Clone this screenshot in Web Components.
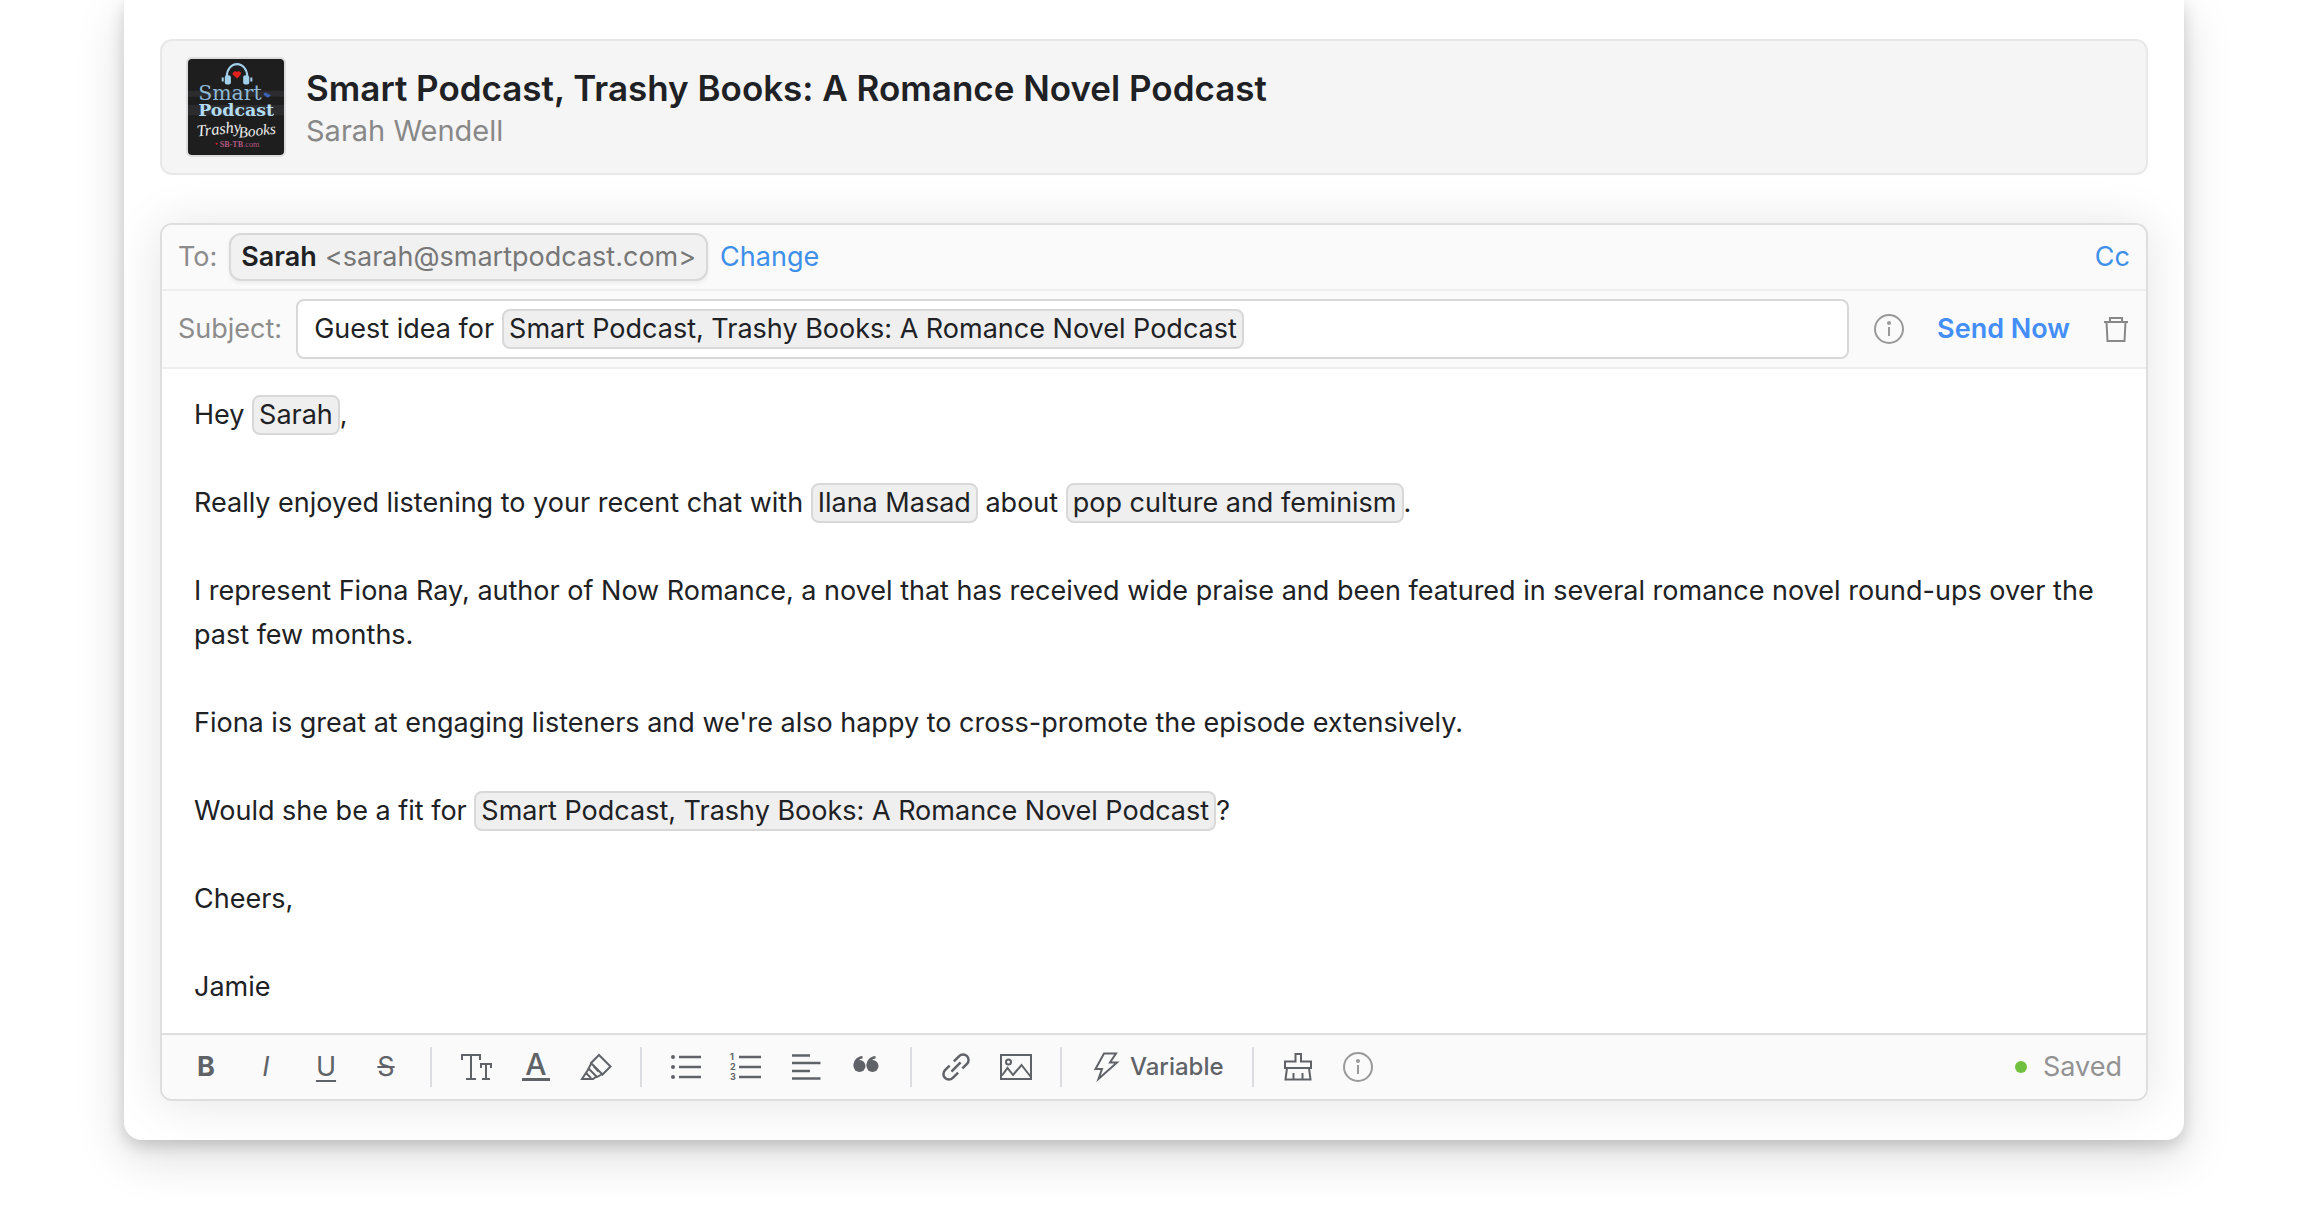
<!DOCTYPE html>
<html lang="en">
<head>
<meta charset="utf-8">
<meta name="viewport" content="width=device-width, initial-scale=1">
<title>Compose email</title>
<style>
    body {
        margin: 0;
        background: #fff;
        color: #202124;
        font: 27px/44px Inter, "Liberation Sans", sans-serif;
    }
    p {
        margin: 0;
    }
    p + p {
        margin-top: 44px;
    }
</style>
</head>
<body>
<pitch-card>
    <podcast-banner>
        <cover-art slot="cover"></cover-art>
        <span slot="title">Smart Podcast, Trashy Books: A Romance Novel Podcast</span>
        <span slot="host">Sarah Wendell</span>
    </podcast-banner>
    <email-composer>
        <recipient-row slot="header">
            <recipient-pill slot="recipient" name="Sarah">&lt;sarah@smartpodcast.com&gt;</recipient-pill>
        </recipient-row>
        <subject-row slot="header" value="Guest idea for">
            <merge-tag>Smart Podcast, Trashy Books: A Romance Novel Podcast</merge-tag>
        </subject-row>
        <p>Hey <merge-tag>Sarah</merge-tag>,</p>
        <p>Really enjoyed listening to your recent chat with <merge-tag>Ilana Masad</merge-tag> about <merge-tag>pop culture and feminism</merge-tag>.</p>
        <p>I represent Fiona Ray, author of Now Romance, a novel that has received wide praise and been featured in several romance novel round-ups over the past few months.</p>
        <p>Fiona is great at engaging listeners and we're also happy to cross-promote the episode extensively.</p>
        <p>Would she be a fit for <merge-tag>Smart Podcast, Trashy Books: A Romance Novel Podcast</merge-tag>?</p>
        <p>Cheers,</p>
        <p>Jamie</p>
        <format-toolbar slot="toolbar">
            <tool-button label="Bold"><b>B</b></tool-button>
            <tool-button label="Italic"><i>I</i></tool-button>
            <tool-button label="Underline"><u>U</u></tool-button>
            <tool-button label="Strikethrough"><s>S</s></tool-button>
            <tool-divider></tool-divider>
            <tool-button label="Text size"><line-icon name="size"></line-icon></tool-button>
            <tool-button label="Text color"><line-icon name="color"></line-icon></tool-button>
            <tool-button label="Highlight"><line-icon name="highlight"></line-icon></tool-button>
            <tool-divider></tool-divider>
            <tool-button label="Bulleted list"><line-icon name="bullets"></line-icon></tool-button>
            <tool-button label="Numbered list"><line-icon name="numbers"></line-icon></tool-button>
            <tool-button label="Align"><line-icon name="align"></line-icon></tool-button>
            <tool-button label="Quote"><line-icon name="quote"></line-icon></tool-button>
            <tool-divider></tool-divider>
            <tool-button label="Link"><line-icon name="link"></line-icon></tool-button>
            <tool-button label="Image"><line-icon name="image"></line-icon></tool-button>
            <tool-divider></tool-divider>
            <tool-button wide label="Variable"><line-icon name="bolt"></line-icon>Variable</tool-button>
            <tool-divider></tool-divider>
            <tool-button label="Clear formatting"><line-icon name="brush"></line-icon></tool-button>
            <tool-button label="Help"><line-icon name="info"></line-icon></tool-button>
            <save-status slot="status">Saved</save-status>
        </format-toolbar>
    </email-composer>
</pitch-card>

<script>
const icons = {
    size: `<path d="M2 9V4H20V9M11 4V28M6 28H16M21 17V13H31V17M26 13V28M22 28H30"/>`,
    color: `<text x="16" y="24" font-size="30" font-weight="500" text-anchor="middle" fill="currentColor" stroke="none">A</text>
        <path d="M2 28.5H30" stroke-width="3"/>`,
    highlight: `<path d="M19 4L30.5 15.5 22.5 23.5 11 12zM11 13L8.5 17.5 17 26 21.5 23.5M13.5 15L18.5 20.5M8.5 18L2 28H13L16.5 25.5M6 22L11 27"/>`,
    bullets: `<g fill="currentColor" stroke="none"><circle cx="3" cy="6" r="2"/><circle cx="3" cy="16" r="2"/><circle cx="3" cy="26" r="2"/></g>
        <path d="M9 6H31M9 16H31M9 26H31" stroke-width="2.5"/>`,
    numbers: `<g font-size="9" font-weight="700" fill="currentColor" stroke="none"><text x="0" y="9">1</text><text x="0" y="19">2</text><text x="0" y="29">3</text></g>
        <path d="M9 6H31M9 16H31M9 26H31" stroke-width="2.5"/>`,
    align: `<path d="M2 4.5H20M2 12H30.5M2 20H20M2 27.5H30.5" stroke-width="2.5"/>`,
    quote: `<g fill="currentColor" stroke="none"><circle cx="9.5" cy="15" r="6"/><circle cx="22.5" cy="15" r="6"/>
        <path d="M3.5 15C3.5 9 7 5.5 12.5 5V7.5C9.5 8 8 9.5 7.5 12zM16.5 15C16.5 9 20 5.5 25.5 5V7.5C22.5 8 21 9.5 20.5 12z"/></g>`,
    link: `<path transform="rotate(-45 16 16)" d="M12.5 10.5H6A5.5 5.5 0 0 0 6 21.5H13.5M19.5 21.5H26A5.5 5.5 0 0 0 26 10.5H18.5M9.5 16H22.5" stroke-width="2.5"/>`,
    image: `<path d="M1 4H31V28H1zM2 24.5L7.5 17 13 24 21.5 14 30.5 25.5"/><circle cx="8.5" cy="11" r="2.5"/>`,
    bolt: `<path d="M14 2.5H26L20 11.5H27L8.5 28 12 18H5.5z"/>`,
    brush: `<path d="M13.5 10.5V3H19V10.5H29V17H3V10.5zM5 17L3.5 28.5H28.5L27 17M11.5 22V28M20.5 22V28"/>`,
    info: `<circle cx="16" cy="16" r="14" stroke="#999"/><circle cx="16" cy="10" r="2" fill="#999" stroke="none"/><path d="M16 14V23" stroke="#999"/>`,
    trash: `<path d="M6 9H30M12 9V5H24V9M8.5 9L9.5 28H26.5L27.5 9" stroke="#888"/>`
};

class ShadowElement extends HTMLElement {
    constructor() {
        super();
        this.attachShadow({mode: 'open'});
    }
    connectedCallback() {
        this.shadowRoot.innerHTML = this.render();
    }
    render() {
        return `<slot></slot>`;
    }
}

customElements.define("line-icon", class extends ShadowElement {
    render() {
        return `
            <svg viewBox="0 0 32 32" width="32" height="32" fill="none" stroke="currentColor" stroke-width="2" aria-hidden="true">
                ${icons[this.getAttribute("name")]}
            </svg>
            <style>
                :host {
                    display: block;
                    flex: none;
                }
                svg {
                    display: block;
                    overflow: visible;
                }
            </style>
        `;
    }
});

customElements.define("pitch-card", class extends ShadowElement {
    render() {
        return `
            <slot></slot>
            <style>
                :host {
                    display: flex;
                    flex-direction: column;
                    gap: 48px;
                    margin: 0 124px 74px;
                    padding: 39px 36px;
                    border-radius: 0 0 18px 18px;
                    background: #fff;
                    box-shadow: 0 16px 50px rgba(0, 0, 0, .14), 0 6px 16px rgba(0, 0, 0, .16);
                }
            </style>
        `;
    }
});

customElements.define("podcast-banner", class extends ShadowElement {
    render() {
        return `
            <slot name="cover"></slot>
            <div class="info">
                <h1><slot name="title"></slot></h1>
                <div class="host"><slot name="host"></slot></div>
            </div>
            <style>
                :host {
                    display: flex;
                    align-items: center;
                    gap: 20px;
                    padding: 16px 24px;
                    border: 2px solid #e8e8e8;
                    border-radius: 12px;
                    background: #f5f5f5;
                }
                .info {
                    padding-top: 4px;
                }
                h1 {
                    margin: 0;
                    font-size: 35px;
                    font-weight: 600;
                    line-height: 44px;
                }
                .host {
                    color: #888;
                    font-size: 29px;
                    line-height: 42px;
                }
            </style>
        `;
    }
});

customElements.define("cover-art", class extends ShadowElement {
    render() {
        return `
            <svg viewBox="0 0 94 94" role="img" aria-label="Podcast cover">
                <rect width="94" height="94" fill="#1e1e1f"/>
                <path d="M0 31H94V37H0zM0 45H94V55H0z" fill="#2c2c2e"/>
                <path d="M38 20V17A10 12 0 0 1 58 17V20" fill="none" stroke="#a3d0ea" stroke-width="2"/>
                <rect x="36" y="16" width="6" height="9" rx="2" fill="#a3d0ea"/>
                <rect x="54" y="16" width="6" height="9" rx="2" fill="#a3d0ea"/>
                <path d="M34 18V22M62 18V22" stroke="#a3d0ea" stroke-width="2"/>
                <path d="M48 19L43.5 15A3 3 0 0 1 48 12.5A3 3 0 0 1 52 13.5Q52 16 48 19z" fill="#e2211c"/>
                <path d="M78 38L74 35A2 2 0 0 1 78 34.5A2 2 0 0 1 81 36z" fill="#3b62b5"/>
                <text x="10" y="40" font-family="DejaVu Serif, serif" font-size="20" fill="#8db9d6">Smart</text>
                <text x="10" y="56" font-family="DejaVu Serif, serif" font-size="17" font-weight="700" fill="#b2dcf2">Podcast</text>
                <g font-family="Liberation Serif, serif" font-style="italic" fill="#eee">
                    <text x="9" y="76" font-size="16" transform="rotate(-6 9 76)">Trashy</text>
                    <text x="50" y="77" font-size="15" transform="rotate(-6 50 77)">Books</text>
                </g>
                <circle cx="28" cy="83" r="1" fill="#e2211c"/>
                <text x="31" y="86" font-family="Liberation Serif, serif" font-size="8" fill="#b0577f"><tspan font-weight="700">SB-TB</tspan>.com</text>
            </svg>
            <style>
                :host {
                    display: block;
                    flex: none;
                    box-sizing: border-box;
                    width: 100px;
                    height: 100px;
                    overflow: hidden;
                    border: 2px solid #dcdcdc;
                    border-radius: 6px;
                }
                svg {
                    display: block;
                }
            </style>
        `;
    }
});

customElements.define("email-composer", class extends ShadowElement {
    render() {
        return `
            <header><slot name="header"></slot></header>
            <div class="body" role="textbox" aria-multiline="true" aria-label="Message"><slot></slot></div>
            <footer><slot name="toolbar"></slot></footer>
            <style>
                :host {
                    display: block;
                    border: 2px solid #dedede;
                    border-radius: 12px;
                    background: #fff;
                    box-shadow: 0 2px 50px rgba(0, 0, 0, .11);
                }
                header {
                    border-radius: 10px 10px 0 0;
                    background: #fafafa;
                }
                .body {
                    padding: 24px 32px;
                }
                footer {
                    border-top: 2px solid #dedede;
                    border-radius: 0 0 10px 10px;
                    background: #fafafa;
                }
            </style>
        `;
    }
});

customElements.define("recipient-row", class extends ShadowElement {
    render() {
        return `
            <span class="label">To:</span>
            <slot name="recipient"></slot>
            <button type="button">Change</button>
            <button type="button" class="cc">Cc</button>
            <style>
                :host {
                    display: flex;
                    align-items: center;
                    gap: 12px;
                    height: 64px;
                    padding: 0 16px;
                    border-bottom: 2px solid #eee;
                }
                .label {
                    color: #8c8c8c;
                }
                button {
                    padding: 0;
                    border: 0;
                    background: none;
                    color: #3d8fea;
                    font: inherit;
                    cursor: pointer;
                }
                .cc {
                    margin-left: auto;
                }
            </style>
        `;
    }
});

customElements.define("recipient-pill", class extends ShadowElement {
    render() {
        return `
            <b>${this.getAttribute("name")}</b>
            <span><slot></slot></span>
            <style>
                :host {
                    display: flex;
                    gap: 8px;
                    padding: 0 10px;
                    border: 2px solid #d8d8d8;
                    border-radius: 12px;
                    background: #f1f1f1;
                    box-shadow: 0 2px 4px rgba(0, 0, 0, .06);
                }
                b {
                    font-weight: 600;
                }
                span {
                    color: #777;
                }
            </style>
        `;
    }
});

customElements.define("subject-row", class extends ShadowElement {
    render() {
        return `
            <label for="subject">Subject:</label>
            <div class="field">
                <input id="subject" type="text" value="${this.getAttribute("value")}">
                <slot></slot>
            </div>
            <button type="button" class="info" aria-label="Subject help"><line-icon name="info"></line-icon></button>
            <button type="button" class="send">Send Now</button>
            <button type="button" aria-label="Discard draft"><line-icon name="trash"></line-icon></button>
            <style>
                :host {
                    display: flex;
                    align-items: center;
                    height: 76px;
                    padding: 0 16px;
                    border-bottom: 2px solid #eee;
                }
                label {
                    margin-right: 14px;
                    color: #8c8c8c;
                }
                .field {
                    display: flex;
                    flex: 1;
                    align-items: center;
                    gap: 8px;
                    height: 56px;
                    padding: 0 16px;
                    border: 2px solid #d8d8d8;
                    border-radius: 8px;
                    background: #fff;
                }
                input {
                    field-sizing: content;
                    padding: 0;
                    border: 0;
                    outline: 0;
                    background: none;
                    color: inherit;
                    font: inherit;
                }
                button {
                    padding: 0;
                    border: 0;
                    background: none;
                    font: inherit;
                    cursor: pointer;
                }
                .info {
                    margin-left: 24px;
                }
                .send {
                    margin: 0 28px 0 32px;
                    color: #448ef8;
                    font-weight: 600;
                }
            </style>
        `;
    }
});

customElements.define("merge-tag", class extends ShadowElement {
    render() {
        return `
            <slot></slot>
            <style>
                :host {
                    display: inline-block;
                    padding: 0 5px;
                    border: 2px solid #d8d8d8;
                    border-radius: 8px;
                    background: #efefef;
                    line-height: 36px;
                }
            </style>
        `;
    }
});

customElements.define("format-toolbar", class extends ShadowElement {
    render() {
        return `
            <div class="tools" role="toolbar" aria-label="Formatting"><slot></slot></div>
            <slot name="status"></slot>
            <style>
                :host {
                    display: flex;
                    align-items: center;
                    justify-content: space-between;
                    height: 64px;
                    padding: 0 24px 0 14px;
                }
                .tools {
                    display: flex;
                    align-items: center;
                }
            </style>
        `;
    }
});

customElements.define("tool-button", class extends ShadowElement {
    render() {
        return `
            <button type="button" aria-label="${this.getAttribute("label")}"><slot></slot></button>
            <style>
                :host {
                    display: block;
                }
                button {
                    display: flex;
                    align-items: center;
                    justify-content: center;
                    gap: 8px;
                    width: 60px;
                    height: 60px;
                    padding: 0;
                    border: 0;
                    background: none;
                    color: #5f6368;
                    font: inherit;
                    cursor: pointer;
                }
                :host([wide]) button {
                    width: auto;
                    padding: 0 14px;
                    font-size: 24px;
                    font-weight: 500;
                }
                ::slotted(u) {
                    text-underline-offset: 4px;
                }
            </style>
        `;
    }
});

customElements.define("tool-divider", class extends ShadowElement {
    render() {
        return `
            <style>
                :host {
                    display: block;
                    width: 2px;
                    height: 40px;
                    margin: 0 14px;
                    background: #dadce0;
                }
            </style>
        `;
    }
});

customElements.define("save-status", class extends ShadowElement {
    render() {
        return `
            <span class="dot"></span>
            <slot></slot>
            <style>
                :host {
                    display: flex;
                    align-items: center;
                    gap: 16px;
                    color: #929292;
                }
                .dot {
                    width: 12px;
                    height: 12px;
                    border-radius: 50%;
                    background: #72c040;
                }
            </style>
        `;
    }
});
</script>
</body>
</html>
